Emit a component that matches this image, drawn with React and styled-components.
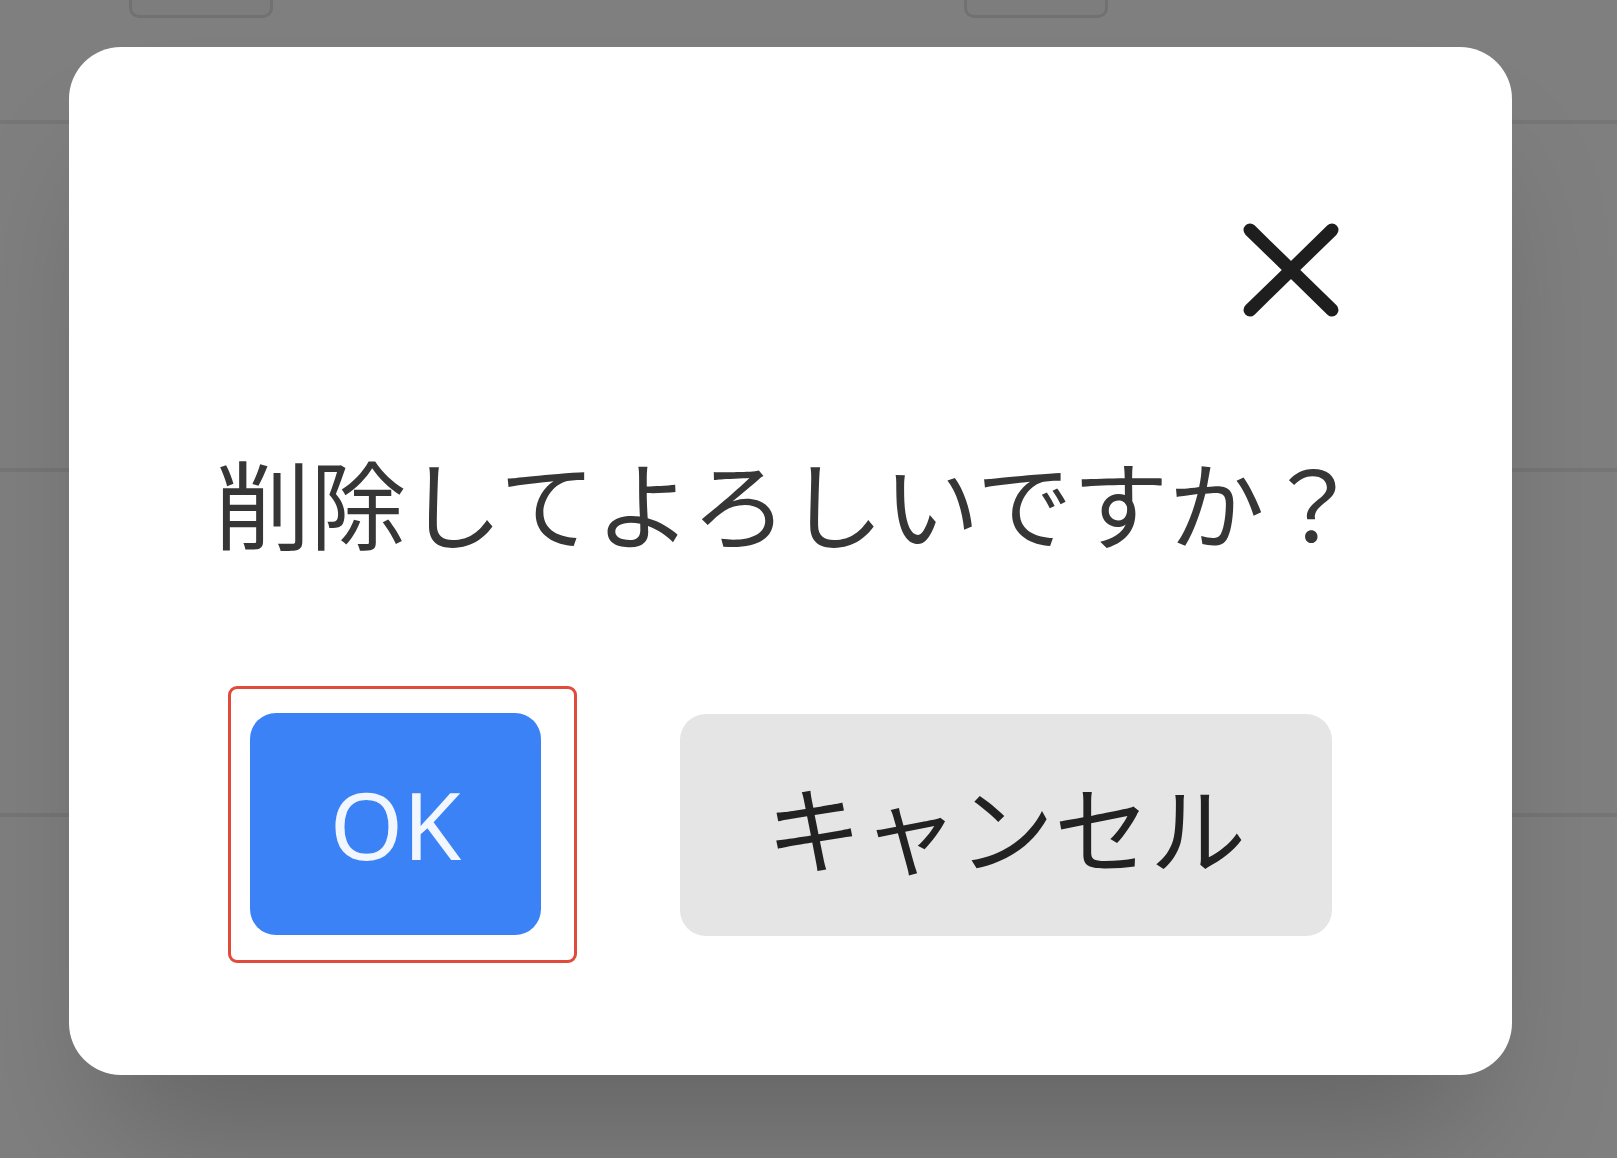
import styled, { createGlobalStyle } from 'styled-components';

const GlobalStyle = createGlobalStyle`
  html, body {
    margin: 0;
    padding: 0;
    width: 1617px;
    height: 1158px;
    overflow: hidden;
    background: #ffffff;
    font-family: "Noto Sans", "Noto Sans CJK JP", sans-serif;
  }
`

const Page = styled.div`
  position: relative;
  width: 1617px;
  height: 1158px;
  background: #ffffff;
`
const Row = styled.div`
  display: flex;
  align-items: flex-start;
  height: ${(p) => p.$height}px;
  border-bottom: 4px solid #ececec;
  box-sizing: border-box;
`
const Cell = styled.div`
  width: ${(p) => p.$width}px;
  display: flex;
  justify-content: center;
`
const RowButton = styled.div`
  width: 144px;
  height: 18px;
  box-sizing: border-box;
  background: #fafafa;
  border: 3px solid #e2e2e2;
  border-top: none;
  border-radius: 0 0 10px 10px;
`
const Overlay = styled.div`
  position: absolute;
  inset: 0;
  background: rgba(0, 0, 0, 0.5);
  padding: 47px 0 0 69px;
  box-sizing: border-box;
`
const Modal = styled.div`
  width: 1443px;
  height: 1028px;
  box-sizing: border-box;
  background: #ffffff;
  border-radius: 52px;
  box-shadow: 0 90px 140px -40px rgba(0, 0, 0, 0.22);
  display: flex;
  flex-direction: column;
  padding-top: 175px;
`
const Header = styled.div`
  display: flex;
  justify-content: flex-end;
  padding-right: 172px;
`
const CloseButton = styled.button`
  width: 98px;
  height: 96px;
  padding: 0;
  border: none;
  background: none;
  display: flex;
`
const Message = styled.p`
  margin: 113px 0 0 -6px;
  text-align: center;
  white-space: nowrap;
  font-family: "Noto Sans CJK JP", sans-serif;
  font-size: 96px;
  font-weight: 400;
  line-height: 139px;
  color: #363636;
`
const Actions = styled.div`
  display: flex;
  align-items: center;
  gap: 103px;
  margin: 116px 0 0 159px;
`
const Highlight = styled.div`
  border: 3px solid #e24a3b;
  border-radius: 9px;
  padding: 24px 33px 25px 19px;
  display: flex;
`
const Button = styled.button`
  width: ${(p) => p.$width}px;
  height: 222px;
  border: none;
  border-radius: 26px;
  background: ${(p) => (p.$primary ? '#3b82f6' : '#e5e5e5')};
  color: ${(p) => (p.$primary ? '#f2f6fe' : '#222222')};
  font-family: "Noto Sans", "Noto Sans CJK JP", sans-serif;
  font-size: ${(p) => (p.$primary ? 94 : 96)}px;
  display: flex;
  align-items: center;
  justify-content: center;
  padding: 0;
`

const CloseIcon = () => (
  <svg width="98" height="96" viewBox="0 0 98 96">
    <path d="M8 8 L90 88 M90 8 L8 88" stroke="#1e1e1e" strokeWidth="13" strokeLinecap="round" fill="none" />
  </svg>
)

export default function App() {
  return (
    <Page>
      <GlobalStyle />
      <Row $height={124}>
        <Cell $width={129} />
        <Cell $width={144}><RowButton /></Cell>
        <Cell $width={691} />
        <Cell $width={144}><RowButton /></Cell>
      </Row>
      <Row $height={348} />
      <Row $height={345} />
      <Overlay>
        <Modal>
          <Header>
            <CloseButton aria-label="閉じる"><CloseIcon /></CloseButton>
          </Header>
          <Message>削除してよろしいですか？</Message>
          <Actions>
            <Highlight>
              <Button $primary $width={291}>OK</Button>
            </Highlight>
            <Button $width={652}>キャンセル</Button>
          </Actions>
        </Modal>
      </Overlay>
    </Page>
  );
}
